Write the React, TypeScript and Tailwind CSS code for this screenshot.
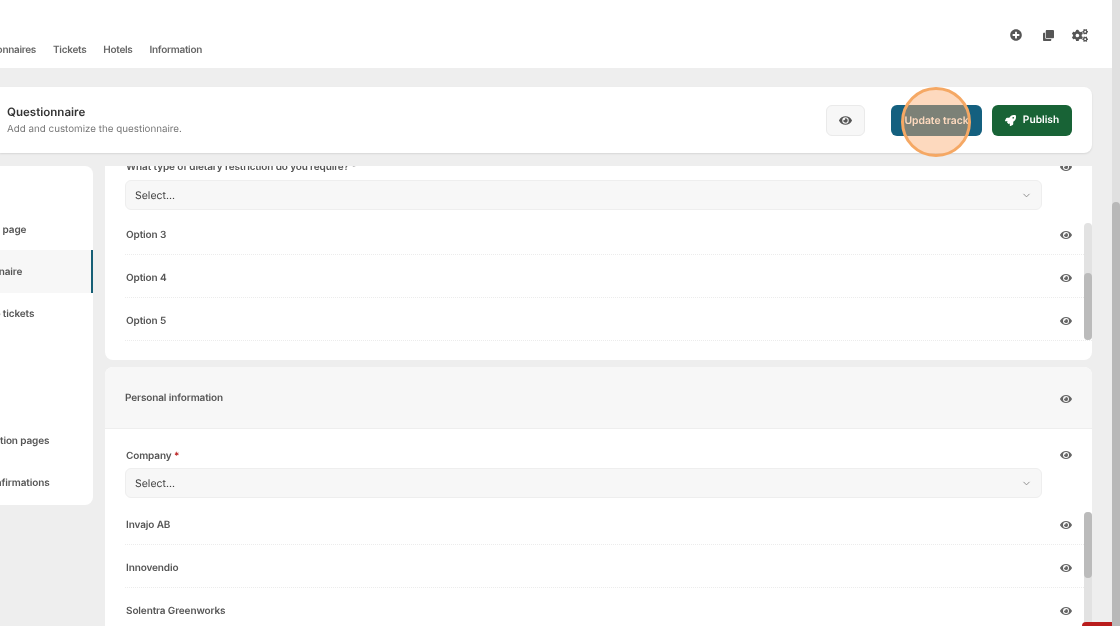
import { FaCogs, FaClone, FaEye, FaPlusCircle, FaRocket } from "react-icons/fa";
import { ChevronDown } from "lucide-react";

function Row({ label, last }: { label: string; last?: boolean }) {
  return (
    <div className={`box-border flex h-[43px] items-center justify-between border-b border-dotted pr-[20px] pt-[3px] ${last ? "border-transparent" : "border-[#ececec]"}`}>
      <span className="ml-[1px] pt-[1px] text-[10px] font-semibold tracking-[-0.012em] text-[#555]">{label}</span>
      <FaEye className="text-[12px] text-[#666]" />
    </div>
  );
}

function Select() {
  return (
    <div className="flex h-[30px] w-[917px] items-center justify-between rounded-[6px] border border-[#eee] bg-[#f7f7f7] pl-[9px] pr-[9px] pt-[1px] text-[10.5px] text-[#444]">
      <span>Select...</span>
      <ChevronDown size={11} className="text-[#888]" />
    </div>
  );
}

function SideItem({ label, active }: { label?: string; active?: boolean }) {
  return (
    <div className={`flex h-[42.3px] items-center text-[10px] font-semibold tracking-[-0.012em] text-[#555] ${active ? "border-r-2 border-[#155e75] bg-[#f7f7f7]" : ""}`}>
      <span className="ml-[-44px] whitespace-nowrap pt-[2px]">{label}</span>
    </div>
  );
}

export default function App() {
  return (
    <div className="flex h-[626px] w-[1120px] overflow-hidden bg-[#eee] font-['Inter',sans-serif] blur-[0.35px] [text-rendering:geometricPrecision]">
      <div className="relative flex w-[1112px] shrink-0 flex-col">
        <header className="flex h-[68px] shrink-0 bg-white pr-[24px]">
          <nav className="ml-[-33px] flex gap-[17px] pt-[43px] text-[10px] font-semibold tracking-[-0.03em] text-[#666]">
            <span>Questionnaires</span>
            <span>Tickets</span>
            <span>Hotels</span>
            <span>Information</span>
          </nav>
          <div className="ml-auto flex items-start pt-[29px] text-[#555]">
            <FaPlusCircle className="h-[12px] w-[12px]" />
            <FaClone className="ml-[21px] mt-[1px] h-[11px] w-[11px]" />
            <FaCogs className="ml-[18px] h-[13px] w-[16px]" />
          </div>
        </header>

        <div className="mt-[19px] flex h-[66px] w-[1092px] shrink-0 items-center justify-between rounded-r-[8px] bg-white pl-[7px] pr-[20px] shadow-[0_1px_2px_rgba(0,0,0,0.1)]">
          <div className="mb-[1px]">
            <div className="text-[11.55px] font-semibold leading-[18px] text-[#333]">Questionnaire</div>
            <div className="pt-[1px] text-[9.8px] leading-[15px] text-[#777]">Add and customize the questionnaire.</div>
          </div>
          <div className="flex items-center">
            <div className="mr-[26px] flex h-[31px] w-[39px] items-center justify-center rounded-[6px] border border-[#eaeaea] bg-[#f7f7f7]">
              <FaEye className="text-[13px] text-[#555]" />
            </div>
            <div className="mr-[10px] flex h-[31px] w-[91px] items-center justify-center rounded-[6px] bg-[#14607f] pt-[3px] text-[10.35px] font-semibold text-white">Update track</div>
            <div className="flex h-[31px] w-[80px] items-center justify-center gap-[7px] rounded-[6px] bg-[#186336] text-[10.2px] font-semibold text-white">
              <FaRocket className="text-[11px]" />
              <span className="pt-[1px]">Publish</span>
            </div>
          </div>
        </div>

        <div className="mt-[13px] flex min-h-0 w-[1092px] flex-1 gap-[12px]">
          <aside className="h-[339px] w-[93px] shrink-0 overflow-hidden rounded-r-[8px] bg-white pt-[42px]">
            <SideItem label="Welcome page" />
            <SideItem label="Questionnaire" active />
            <SideItem label="Purchase tickets" />
            <SideItem />
            <SideItem />
            <SideItem label="Confirmation pages" />
            <SideItem label="Email confirmations" />
          </aside>

          <main className="flex min-w-0 flex-1 flex-col gap-[7px] overflow-hidden">
            <section className="relative h-[194px] shrink-0 overflow-hidden rounded-b-[8px] bg-white pl-[20px]">
              <div className="mt-[-6px] flex h-[13px] items-center justify-between pr-[20px]">
                <span className="ml-[1px] pt-[1px] text-[10px] font-semibold tracking-[-0.012em] text-[#555]">What type of dietary restriction do you require? *</span>
                <FaEye className="text-[12px] text-[#666]" />
              </div>
              <div className="mb-[2px] mt-[7px]"><Select /></div>
              <Row label="Option 3" />
              <Row label="Option 4" />
              <Row label="Option 5" />
              <div className="absolute right-0 top-[57px] h-[117px] w-[8px] rounded-full bg-[#e2e2e2]">
                <div className="absolute bottom-0 h-[67px] w-[8px] rounded-full bg-[#bbb]" />
              </div>
            </section>

            <section className="relative min-h-0 flex-1 rounded-t-[8px] bg-white">
              <div className="flex h-[62px] items-center justify-between rounded-t-[8px] border-b border-[#eee] bg-[#f7f7f7] px-[20px]">
                <span className="pt-[2px] text-[10px] font-semibold tracking-[-0.012em] text-[#555]">Personal information</span>
                <FaEye className="mt-[2px] text-[12px] text-[#666]" />
              </div>
              <div className="pl-[20px]">
                <div className="mt-[18px] flex h-[16px] items-center justify-between pr-[20px]">
                  <span className="ml-[1px] pt-[3px] text-[10px] font-semibold tracking-[-0.012em] text-[#555]">Company <span className="text-[#b91c1c]">*</span></span>
                  <FaEye className="text-[12px] text-[#666]" />
                </div>
                <div className="mb-[4px] mt-[5px]"><Select /></div>
                <Row label="Invajo AB" />
                <Row label="Innovendio" />
                <Row label="Solentra Greenworks" last />
              </div>
              <div className="absolute right-0 top-[145px] h-[120px] w-[8px] rounded-t-full bg-[#e2e2e2]">
                <div className="h-[66px] w-[8px] rounded-full bg-[#bbb]" />
              </div>
            </section>
          </main>
        </div>

        <div className="absolute left-[901px] top-[87px] h-[70px] w-[70px] rounded-full border-[3px] border-[#f5a864] bg-[rgba(250,170,110,0.45)]" />
        <div className="absolute bottom-0 right-0 h-[4px] w-[30px] rounded-tl-[6px] bg-[#b91c1c]" />
      </div>
      <div className="flex w-[8px] flex-col bg-[#e0e0e0] pt-[202px]">
        <div className="flex-1 rounded-t-full bg-[#b8b8b8]" />
      </div>
    </div>
  );
}
